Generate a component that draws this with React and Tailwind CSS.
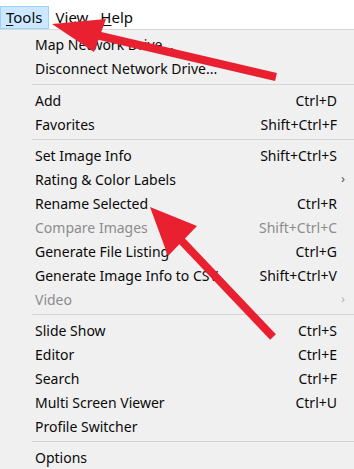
import React from "react";

const items = [
  { t: "Map Network Drive..." },
  { t: "Disconnect Network Drive..." },
  { sep: 8 },
  { t: "Add", k: "Ctrl+D" },
  { t: "Favorites", k: "Shift+Ctrl+F" },
  { sep: 7 },
  { t: "Set Image Info", k: "Shift+Ctrl+S" },
  { t: "Rating & Color Labels", sub: true },
  { t: "Rename Selected", k: "Ctrl+R" },
  { t: "Compare Images", k: "Shift+Ctrl+C", dis: true },
  { t: "Generate File Listing", k: "Ctrl+G" },
  { t: "Generate Image Info to CSV", k: "Shift+Ctrl+V" },
  { t: "Video", sub: true, dis: true },
  { sep: 7 },
  { t: "Slide Show", k: "Ctrl+S" },
  { t: "Editor", k: "Ctrl+E" },
  { t: "Search", k: "Ctrl+F" },
  { t: "Multi Screen Viewer", k: "Ctrl+U" },
  { t: "Profile Switcher" },
  { sep: 7 },
  { t: "Options" },
];

export default function App() {
  return (
    <div
      className="relative w-[354px] h-[469px] overflow-hidden bg-[#f0f0f0] text-[14px] text-[#0a0a0a]"
      style={{ fontFamily: '"Noto Sans", "Open Sans", sans-serif' }}
    >
      <div className="h-[30px] bg-white border-b border-[#d9d9d9] flex items-end text-[15px]">
        <div className="h-[23px] flex items-center px-[5px] bg-[#cce8ff] border border-[#99d1ff] leading-none">
          <span><span className="underline underline-offset-2">T</span>ools</span>
        </div>
        <div className="h-[23px] flex items-center pl-[7px] leading-none">
          <span>Vie<span className="underline underline-offset-2">w</span></span>
        </div>
        <div className="h-[23px] flex items-center pl-[12px] leading-none">
          <span><span className="underline underline-offset-2">H</span>elp</span>
        </div>
      </div>
      <div className="pt-[2px] flex flex-col">
        {items.map((it, i) =>
          it.sep ? (
            <div key={i} className={`${it.sep === 8 ? "h-[8px]" : "h-[7px]"} flex items-center pl-[32px]`}>
              <div className="h-px w-full bg-[#d4d4d4]" />
            </div>
          ) : (
            <div
              key={i}
              className={`h-[24px] flex items-center pl-[35px] pr-[17px] whitespace-nowrap ${it.dis ? "text-[#8c8c8c]" : ""}`}
            >
              <span className="flex-1">{it.t}</span>
              {it.k && <span>{it.k}</span>}
              {it.sub && (
                <span className={`-mr-[8px] text-[13px] ${it.dis ? "text-[#b5b5b5]" : "text-[#555]"}`}>›</span>
              )}
            </div>
          )
        )}
      </div>
      <svg className="absolute inset-0 pointer-events-none" width="354" height="469" viewBox="0 0 354 469">
        <line x1="276" y1="77" x2="96" y2="35" stroke="#e8202f" strokeWidth="8" strokeLinecap="butt" />
        <polygon points="52,24 106,19 94,52" fill="#e8202f" />
        <line x1="273" y1="337" x2="178" y2="237" stroke="#e8202f" strokeWidth="8" strokeLinecap="butt" />
        <polygon points="150,207 197,226 168,256" fill="#e8202f" />
      </svg>
    </div>
  );
}
